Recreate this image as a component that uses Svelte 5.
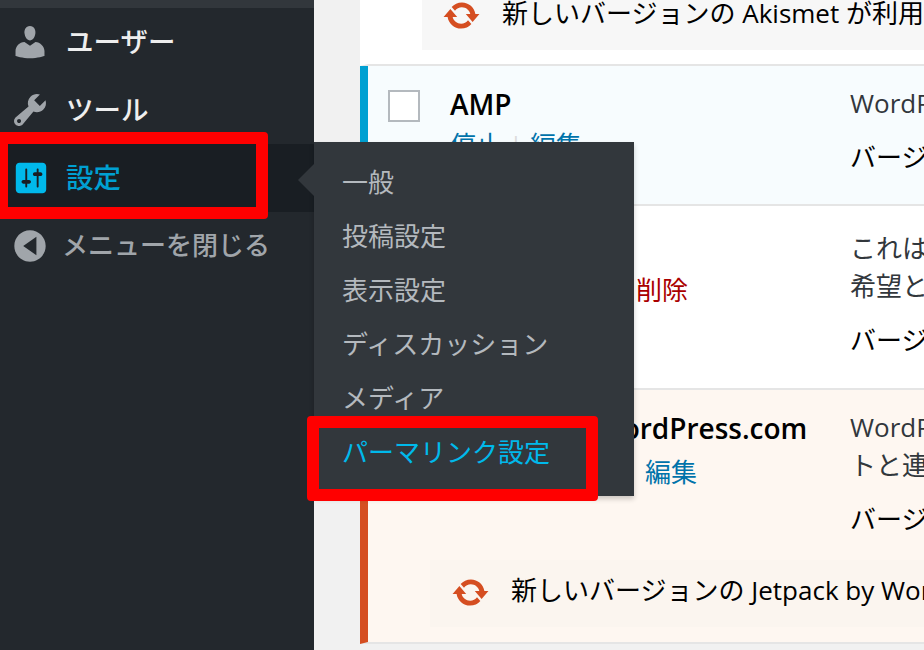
<script lang="ts">
  const menu = [
    {
      label: "ユーザー",
      d: "M10 9.25c-2.27 0-2.73-3.44-2.73-3.44C7 4.02 7.82 2 9.97 2c2.16 0 2.98 2.02 2.71 3.81 0 0-.41 3.44-2.68 3.44zm0 2.57L12.72 10c2.39 0 4.52 2.33 4.52 4.53v2.49s-3.65 1.13-7.24 1.13c-3.65 0-7.24-1.13-7.24-1.13v-2.49c0-2.25 1.94-4.48 4.47-4.48z"
    },
    {
      label: "ツール",
      d: "M16.68 9.77c-1.34 1.34-3.3 1.67-4.95.99l-5.41 6.52c-.99.99-2.59.99-3.58 0s-.99-2.59 0-3.57l6.52-5.42c-.68-1.65-.35-3.61.99-4.95 1.28-1.28 3.12-1.62 4.72-1.06l-2.89 2.89 2.82 2.82 2.86-2.87c.53 1.58.18 3.39-1.08 4.67zM3.81 16.21c.4.39 1.04.39 1.43 0 .4-.4.4-1.04 0-1.43-.39-.4-1.03-.4-1.43 0-.39.39-.39 1.03 0 1.43z"
    },
    {
      label: "設定",
      current: true,
      d: "M18 16V4c0-1.1-.9-2-2-2H4c-1.1 0-2 .9-2 2v12c0 1.1.9 2 2 2h12c1.1 0 2-.9 2-2zM8 11h1c.55 0 1 .45 1 1s-.45 1-1 1H8v1.5c0 .28-.22.5-.5.5s-.5-.22-.5-.5V13H6c-.55 0-1-.45-1-1s.45-1 1-1h1V5.5c0-.28.22-.5.5-.5s.5.22.5.5V11zm5-2h-1c-.55 0-1-.45-1-1s.45-1 1-1h1V5.5c0-.28.22-.5.5-.5s.5.22.5.5V7h1c.55 0 1 .45 1 1s-.45 1-1 1h-1v5.5c0 .28-.22.5-.5.5s-.5-.22-.5-.5V9z"
    }
  ];
  const collapseIcon =
    "M10 2.16c4.33 0 7.84 3.51 7.84 7.84s-3.51 7.84-7.84 7.84S2.16 14.33 2.16 10 5.67 2.16 10 2.16zM13.2 5.4L6.6 10l6.6 4.6z";
  const updateIcon =
    "M10.2 3.28c3.53 0 6.43 2.61 6.92 6h2.08l-3.5 4-3.5-4h2.32c-.45-1.97-2.21-3.45-4.32-3.45-1.45 0-2.73.71-3.54 1.78L4.95 5.66C6.23 4.2 8.11 3.28 10.2 3.28zm-.4 13.44c-3.52 0-6.43-2.61-6.92-6H.8l3.5-4c1.17 1.33 2.33 2.67 3.5 4H5.48c.45 1.97 2.21 3.45 4.32 3.45 1.45 0 2.73-.71 3.54-1.78l1.71 1.95c-1.28 1.46-3.15 2.38-5.25 2.38z";
  const submenu = ["一般", "投稿設定", "表示設定", "ディスカッション", "メディア", "パーマリンク設定"];
</script>

<div class="page">
  <aside class="sidebar">
    <div class="strip"></div>
    {#each menu as item}
      <div class="item" class:current={item.current}>
        <span class="icon">
          <svg viewBox="0 0 20 20" class:small={item.current}><path fill-rule="evenodd" d={item.d} /></svg>
        </span>
        <span class="label">{item.label}</span>
      </div>
    {/each}
    <div class="item collapse">
      <span class="icon"><svg viewBox="0 0 20 20"><path fill-rule="evenodd" d={collapseIcon} /></svg></span>
      <span class="label">メニューを閉じる</span>
    </div>
  </aside>

  <main class="main">
    <section class="row first">
      <div class="notice">
        <svg viewBox="0 0 20 20"><path d={updateIcon} /></svg>
        <span class="notice-text">新しいバージョンの Akismet が利用できます。</span>
      </div>
    </section>

    <section class="row active amp">
      <div class="check"><span class="box"></span></div>
      <div>
        <div class="name">AMP</div>
        <div class="actions"><a>停止</a><i>|</i><a>編集</a></div>
      </div>
      <div class="desc">
        <p>WordPress サイトで AMP を有効にします。</p>
        <p class="version">バージョン 0.4.2</p>
      </div>
    </section>

    <section class="row plain">
      <div class="check"><span class="box"></span></div>
      <div>
        <div class="name">Hello Dolly</div>
        <div class="actions"><a>有効化</a><i>|</i><a>編集</a><i>|</i><a class="del">削除</a></div>
      </div>
      <div class="desc">
        <p>これはただのプラグインではありません。<br />希望と情熱を象徴するものです。</p>
        <p class="version">バージョン 1.6</p>
      </div>
    </section>

    <section class="row update">
      <div class="check"><span class="box"></span></div>
      <div>
        <div class="name">Jetpack by WordPress.com</div>
        <div class="actions wide"><a>無効化</a><i>|</i><a>設定</a><i>|</i><a>編集</a></div>
      </div>
      <div class="desc">
        <p>WordPress.com のクラウドにサイ<br />トと連携します。</p>
        <p class="version">バージョン 4.0.3</p>
      </div>
      <div class="notice">
        <svg viewBox="0 0 20 20"><path d={updateIcon} /></svg>
        <span class="notice-text">新しいバージョンの Jetpack by WordPress.com が利用できます。</span>
      </div>
    </section>
  </main>

  <nav class="flyout">
    <span class="arrow"></span>
    {#each submenu as label, i}
      <div class="sub" class:on={i === submenu.length - 1}>{label}</div>
    {/each}
  </nav>

  <div class="mark mark-menu"></div>
  <div class="mark mark-sub"></div>
</div>

<style>
  :global(body) {
    margin: 0;
    background: #f1f1f1;
  }

  .page {
    position: relative;
    display: grid;
    grid-template-columns: 314px 1fr;
    height: 650px;
    overflow: hidden;
    font-family: "Open Sans", "Noto Sans CJK JP", sans-serif;
    font-size: 26px;
  }

  .sidebar {
    background: #23282d;
    font-family: "Noto Sans CJK JP", sans-serif;
  }

  .strip {
    height: 8px;
    background: #32373c;
  }

  .item {
    display: flex;
    align-items: center;
    gap: 16px;
    height: 68px;
    padding-left: 10px;
    color: #eee;
    font-size: 27.5px;
    font-weight: 500;
  }

  .label {
    padding-bottom: 5px;
  }

  .item svg {
    display: block;
    width: 40px;
    height: 40px;
    fill: #a0a5aa;
  }

  .icon {
    display: flex;
    justify-content: center;
    width: 40px;
  }

  .item.current {
    background: #191e23;
    color: #00a0d2;
  }

  .item.current svg {
    fill: #00b9eb;
  }

  .item svg.small {
    width: 38px;
    height: 38px;
    margin-left: 2px;
  }

  .item.collapse {
    gap: 12px;
    color: #a0a5aa;
    font-size: 26px;
  }

  .main {
    padding-left: 46px;
    min-width: 0;
    overflow: hidden;
  }

  .row {
    display: grid;
    grid-template-columns: 82px 400px 1fr;
    border-left: 8px solid #fff;
    border-bottom: 2px solid #e5e5e5;
    background: #fff;
    white-space: nowrap;
  }

  .row.first {
    display: flow-root;
    height: 64px;
  }

  .row.amp {
    height: 140px;
    padding-top: 18px;
    box-sizing: border-box;
    border-left-color: #00a0d2;
    background: #f7fcfe;
  }

  .row.plain {
    height: 184px;
    padding-top: 23px;
    box-sizing: border-box;
  }

  .row.update {
    height: 254px;
    padding-top: 18px;
    box-sizing: border-box;
    border-left-color: #d54e21;
    background: #fef7f1;
  }

  .check {
    padding: 6px 0 0 20px;
  }

  .box {
    display: block;
    box-sizing: border-box;
    width: 32px;
    height: 32px;
    border: 2px solid #b4b9be;
    background: #fff;
  }

  .name {
    color: #000;
    font-size: 28px;
    font-weight: 600;
    line-height: 40px;
  }

  .actions {
    display: flex;
    margin-top: 2px;
    line-height: 38px;
    color: #0073aa;
  }

  .actions i {
    width: 28px;
    color: #ddd;
    font-style: normal;
    text-align: center;
  }

  .actions.wide {
    margin-top: 5px;
  }

  .actions.wide i {
    width: 32.5px;
  }

  .del {
    color: #a00;
  }

  .desc {
    min-width: 0;
    color: #32373c;
    line-height: 38px;
  }

  .desc p {
    margin: 0 0 16px;
  }

  .desc .version {
    color: #000;
  }

  .notice {
    display: flex;
    align-items: center;
    gap: 21px;
    box-sizing: border-box;
    height: 67px;
    margin-left: 54px;
    padding-left: 20px;
    background: #f7f7f7;
    color: #000;
  }

  .notice svg {
    flex: none;
    width: 39px;
    height: 39px;
    margin-bottom: 3px;
    fill: #d54e21;
  }

  .notice-text {
    padding-bottom: 9px;
  }

  .first .notice {
    margin-top: -17px;
  }

  .update .notice {
    grid-column: 1 / -1;
    align-self: end;
    margin: 0 0 15px 62px;
    padding-left: 21px;
    background: #fbf5ef;
  }

  .flyout {
    position: absolute;
    top: 142px;
    left: 314px;
    box-sizing: border-box;
    width: 320px;
    height: 354px;
    padding-top: 12px;
    background: #32373c;
    box-shadow: 0 3px 5px rgba(0, 0, 0, 0.2);
    font-family: "Noto Sans CJK JP", sans-serif;
  }

  .arrow {
    position: absolute;
    top: 22px;
    left: -16px;
    border-style: solid;
    border-width: 16px 16px 16px 0;
    border-color: transparent #32373c transparent transparent;
  }

  .sub {
    height: 54px;
    padding-left: 28px;
    color: #b4b9be;
    line-height: 54px;
  }

  .sub.on {
    color: #00b9eb;
  }

  .mark {
    position: absolute;
    box-sizing: border-box;
    border: 12px solid #f00;
    border-radius: 4px;
  }

  .mark-menu {
    top: 132px;
    left: -4px;
    width: 272px;
    height: 87px;
  }

  .mark-sub {
    top: 416px;
    left: 307px;
    width: 291px;
    height: 85px;
  }
</style>
